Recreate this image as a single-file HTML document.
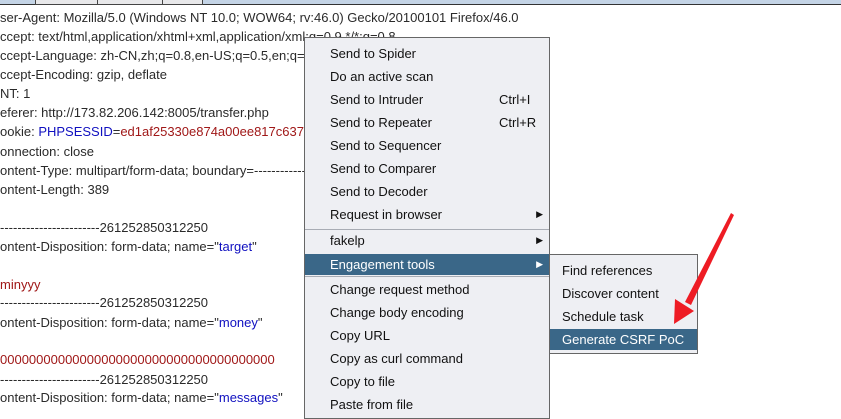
<!DOCTYPE html>
<html><head><meta charset="utf-8"><style>
body{margin:0;width:841px;height:412px;overflow:hidden;background:#fff;position:relative;font-family:"Liberation Sans",Arial,sans-serif;font-size:13px;color:#2a2a2a}
.top{position:absolute;left:0;top:0;width:841px;height:4px;background:#c4d4e6;border-bottom:1px solid #333}
.tb{position:absolute;top:0;height:4px;background:#e8e8ea;border:1px solid #444;border-top:none}
.l{position:absolute;left:0;white-space:pre;line-height:19px}
.b{color:#1010c0}.r{color:#a01818}
.menu{position:absolute;background:#eeeff3;border:1px solid #666}
.it{position:absolute;left:0;right:0;height:23px;line-height:23px;padding-left:25px;color:#111;white-space:pre}
.hl{background:#3a6788;color:#fff}
.sep{position:absolute;left:0;right:0;height:1px;background:#a8acb4}
.ar{position:absolute;right:6px;font-size:9px}
.sc{position:absolute;left:194px}
</style></head><body>
<div class="top"></div>
<div class="tb" style="left:35px;width:61px"></div>
<div class="tb" style="left:97px;width:64px"></div>
<div class="tb" style="left:162px;width:39px"></div>
<div class="l" style="top:8px">ser-Agent: Mozilla/5.0 (Windows NT 10.0; WOW64; rv:46.0) Gecko/20100101 Firefox/46.0</div>
<div class="l" style="top:27px">ccept: text/html,application/xhtml+xml,application/xml;q=0.9,*/*;q=0.8</div>
<div class="l" style="top:46px">ccept-Language: zh-CN,zh;q=0.8,en-US;q=0.5,en;q=0.3</div>
<div class="l" style="top:65px">ccept-Encoding: gzip, deflate</div>
<div class="l" style="top:84px">NT: 1</div>
<div class="l" style="top:103px">eferer: http://173.82.206.142:8005/transfer.php</div>
<div class="l" style="top:122px">ookie: <span class="b">PHPSESSID</span>=<span class="r">ed1af25330e874a00ee817c6376</span></div>
<div class="l" style="top:142px">onnection: close</div>
<div class="l" style="top:161px">ontent-Type: multipart/form-data; boundary=---------------------------261252850312250</div>
<div class="l" style="top:180px">ontent-Length: 389</div>
<div class="l" style="top:218px">-----------------------261252850312250</div>
<div class="l" style="top:237px">ontent-Disposition: form-data; name="<span class="b">target</span>"</div>
<div class="l r" style="top:275px">minyyy</div>
<div class="l" style="top:293px">-----------------------261252850312250</div>
<div class="l" style="top:313px">ontent-Disposition: form-data; name="<span class="b">money</span>"</div>
<div class="l r" style="top:350px">00000000000000000000000000000000000000</div>
<div class="l" style="top:370px">-----------------------261252850312250</div>
<div class="l" style="top:388px">ontent-Disposition: form-data; name="<span class="b">messages</span>"</div>

<div class="menu" style="left:304px;top:37px;width:244px;height:380px">
<div class="it" style="top:4px">Send to Spider</div>
<div class="it" style="top:27px">Do an active scan</div>
<div class="it" style="top:50px">Send to Intruder<span class="sc">Ctrl+I</span></div>
<div class="it" style="top:73px">Send to Repeater<span class="sc">Ctrl+R</span></div>
<div class="it" style="top:96px">Send to Sequencer</div>
<div class="it" style="top:119px">Send to Comparer</div>
<div class="it" style="top:142px">Send to Decoder</div>
<div class="it" style="top:165px">Request in browser<span class="ar">▶</span></div>
<div class="sep" style="top:191px"></div>
<div class="it" style="top:191px">fakelp<span class="ar">▶</span></div>
<div class="sep" style="top:216px"></div>
<div class="it hl" style="top:216px;height:21px;line-height:21px">Engagement tools<span class="ar">▶</span></div>
<div class="sep" style="top:238px"></div>
<div class="it" style="top:240px">Change request method</div>
<div class="it" style="top:263px">Change body encoding</div>
<div class="it" style="top:286px">Copy URL</div>
<div class="it" style="top:309px">Copy as curl command</div>
<div class="it" style="top:332px">Copy to file</div>
<div class="it" style="top:355px">Paste from file</div>
</div>

<div class="menu" style="left:549px;top:254px;width:147px;height:98px">
<div class="it" style="top:4px;padding-left:12px">Find references</div>
<div class="it" style="top:27px;padding-left:12px">Discover content</div>
<div class="it" style="top:50px;padding-left:12px">Schedule task</div>
<div class="it hl" style="top:74px;height:21px;line-height:21px;padding-left:12px">Generate CSRF PoC</div>
</div>

<svg style="position:absolute;left:0;top:0" width="841" height="412">
<polygon points="731,213 734,215 691,305 685,302" fill="#ee1c24"/>
<polygon points="674,324 675,299 694,311" fill="#ee1c24"/>
</svg>
</body></html>
